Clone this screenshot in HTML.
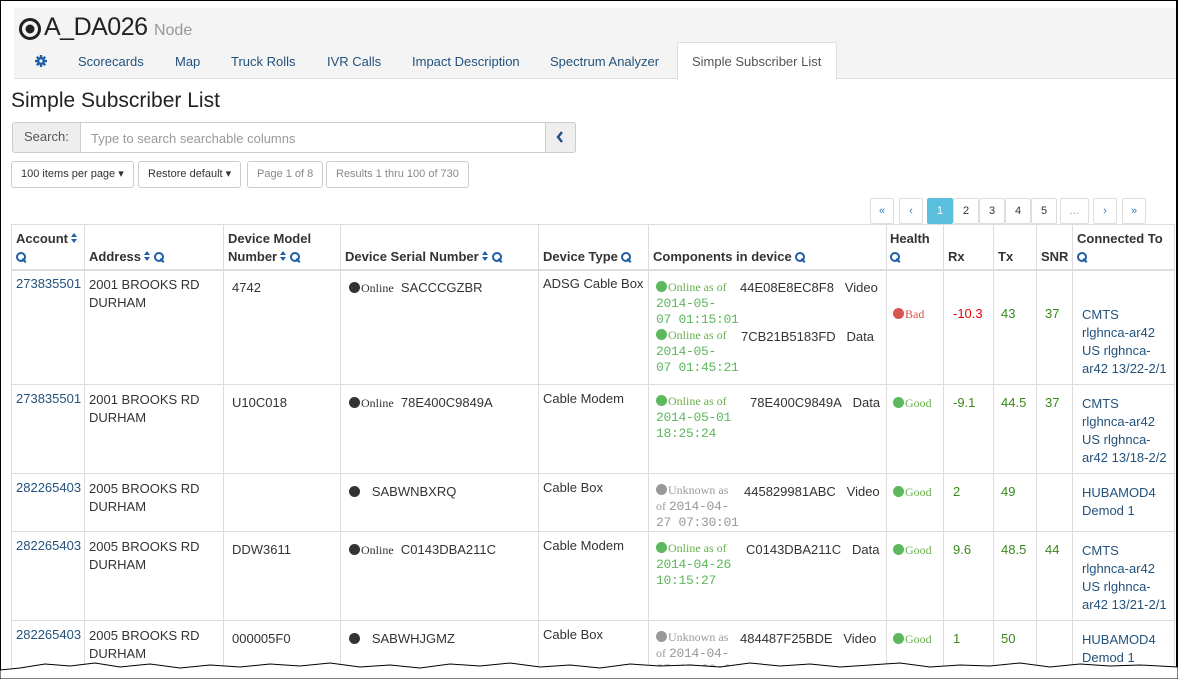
<!DOCTYPE html>
<html><head><meta charset="utf-8"><style>
*{margin:0;padding:0;box-sizing:border-box}
body{width:1178px;height:679px;position:relative;background:#fff;font-family:"Liberation Sans",Arial,sans-serif;font-size:13px;color:#333;overflow:hidden}
.a{position:absolute;white-space:nowrap}
.l{color:#23527c}
.hl{position:absolute;background:#ddd;height:1px}
.vl{position:absolute;background:#ddd;width:1px}
.th{font-weight:bold;color:#333}
.q{display:inline-block;width:10px;height:10px;position:relative;vertical-align:-1px;margin-left:3px}
.q:before{content:"";position:absolute;left:0;top:0;width:6px;height:6px;border:2px solid #1f5fa6;border-radius:50%}
.q:after{content:"";position:absolute;left:7px;top:6px;width:2px;height:5px;background:#1f5fa6;transform:rotate(-45deg)}
.s{display:inline-block;width:7px;height:11px;position:relative;vertical-align:-1px;margin-left:3px}
.s:before{content:"";position:absolute;left:0;top:0;border:3.5px solid transparent;border-bottom:4px solid #1f5fa6;border-top:0}
.s:after{content:"";position:absolute;left:0;top:6px;border:3.5px solid transparent;border-top:4px solid #1f5fa6;border-bottom:0}
.dot{display:inline-block;width:11px;height:11px;border-radius:50%;background:#333;vertical-align:-1px;margin-right:1px}
.on{font-family:"Liberation Serif",serif;font-size:12px}
.g{color:#5cb85c}.gd{background:#5cb85c}.gr{background:#999}
.grn{font-family:"Liberation Serif",serif;font-size:12px;color:#6ab04c}
.gray{font-family:"Liberation Serif",serif;font-size:12px;color:#999}
.dt{font-family:"Liberation Mono",monospace;font-size:13px;line-height:15px;letter-spacing:-0.3px}
.btn{position:absolute;border:1px solid #ccc;border-radius:3px;height:27px;font-size:11px;line-height:25px;padding:0 9px;background:#fff}
.pg{position:absolute;top:198px;height:26px;border:1px solid #ddd;border-radius:2px;font-size:11px;line-height:24px;text-align:center;color:#337ab7;background:#fff}
</style></head><body>
<div class="a" style="left:0;top:0;width:1px;height:670px;background:#000"></div>
<div class="a" style="left:1176px;top:0;width:2px;height:670px;background:#000"></div>
<div class="a" style="left:0;top:0;width:1178px;height:1px;background:#000"></div>
<!-- header -->
<div class="a" style="left:14px;top:8px;width:1162px;height:71px;background:#f4f4f4;border-bottom:1px solid #ddd"></div>
<svg class="a" style="left:18px;top:17px" width="24" height="24" viewBox="0 0 24 24"><circle cx="12" cy="12" r="9.5" fill="none" stroke="#222" stroke-width="3"/><circle cx="12" cy="12" r="4.5" fill="#222"/></svg>
<div class="a" style="left:44px;top:13px;font-size:25px;color:#222;letter-spacing:-0.5px">A_DA026 <span style="font-size:16px;color:#999;letter-spacing:0">Node</span></div>
<svg class="a" style="left:35px;top:55px" width="12" height="12" viewBox="0 0 12 12"><circle cx="6" cy="6" r="4" fill="#1f5fa6"/><g stroke="#1f5fa6" stroke-width="2.4"><line x1="6" y1="0" x2="6" y2="12"/><line x1="0" y1="6" x2="12" y2="6"/><line x1="1.8" y1="1.8" x2="10.2" y2="10.2"/><line x1="10.2" y1="1.8" x2="1.8" y2="10.2"/></g><circle cx="6" cy="6" r="1.6" fill="#f4f4f4"/></svg>
<div class="a l" style="left:78px;top:54px">Scorecards</div>
<div class="a l" style="left:175px;top:54px">Map</div>
<div class="a l" style="left:231px;top:54px">Truck Rolls</div>
<div class="a l" style="left:327px;top:54px">IVR Calls</div>
<div class="a l" style="left:412px;top:54px">Impact Description</div>
<div class="a l" style="left:550px;top:54px">Spectrum Analyzer</div>
<div class="a" style="left:677px;top:42px;width:160px;height:38px;background:#fff;border:1px solid #ddd;border-bottom:0;border-radius:3px 3px 0 0"></div>
<div class="a" style="left:692px;top:54px;color:#555">Simple Subscriber List</div>
<div class="a" style="left:11px;top:89px;font-size:21px;color:#222">Simple Subscriber List</div>
<!-- search -->
<div class="a" style="left:12px;top:122px;width:564px;height:31px;border:1px solid #ccc;border-radius:3px;background:#eee"></div>
<div class="a" style="left:24px;top:129px;color:#555">Search:</div>
<div class="a" style="left:80px;top:122px;width:466px;height:31px;border:1px solid #ccc;background:#fff"></div>
<div class="a" style="left:91px;top:131px;color:#999">Type to search searchable columns</div>
<svg class="a" style="left:556px;top:131px" width="8" height="12" viewBox="0 0 8 12"><path d="M6 1 L2 6 L6 11" fill="none" stroke="#1f4f8a" stroke-width="2.4"/></svg>
<div class="btn" style="left:11px;top:161px;color:#333">100 items per page ▾</div>
<div class="btn" style="left:138px;top:161px;color:#333">Restore default ▾</div>
<div class="btn" style="left:247px;top:161px;color:#888">Page 1 of 8</div>
<div class="btn" style="left:326px;top:161px;color:#888">Results 1 thru 100 of 730</div>
<!-- pagination -->
<div class="pg" style="left:870px;width:24px">«</div>
<div class="pg" style="left:899px;width:24px">‹</div>
<div class="pg" style="left:927px;width:26px;background:#5bc0de;border-color:#5bc0de;color:#fff">1</div>
<div class="pg" style="left:953px;width:26px;color:#333">2</div>
<div class="pg" style="left:979px;width:26px;color:#333">3</div>
<div class="pg" style="left:1005px;width:26px;color:#333">4</div>
<div class="pg" style="left:1031px;width:26px;color:#333">5</div>
<div class="pg" style="left:1060px;width:29px;color:#999">…</div>
<div class="pg" style="left:1093px;width:24px">›</div>
<div class="pg" style="left:1122px;width:24px">»</div>
<!-- grid lines -->
<div class="hl" style="left:11px;top:224px;width:1164px"></div>
<div class="hl" style="left:11px;top:269px;width:1164px;height:2px"></div>
<div class="hl" style="left:11px;top:384px;width:1164px"></div>
<div class="hl" style="left:11px;top:473px;width:1164px"></div>
<div class="hl" style="left:11px;top:531px;width:1164px"></div>
<div class="hl" style="left:11px;top:620px;width:1164px"></div>
<div class="vl" style="left:11px;top:224px;height:450px"></div>
<div class="vl" style="left:84px;top:224px;height:450px"></div>
<div class="vl" style="left:223px;top:224px;height:450px"></div>
<div class="vl" style="left:340px;top:224px;height:450px"></div>
<div class="vl" style="left:538px;top:224px;height:450px"></div>
<div class="vl" style="left:648px;top:224px;height:450px"></div>
<div class="vl" style="left:886px;top:224px;height:450px"></div>
<div class="vl" style="left:943px;top:224px;height:450px"></div>
<div class="vl" style="left:993px;top:224px;height:450px"></div>
<div class="vl" style="left:1036px;top:224px;height:450px"></div>
<div class="vl" style="left:1072px;top:224px;height:450px"></div>
<div class="vl" style="left:1174px;top:224px;height:450px"></div>
<!-- headers -->
<div class="a th" style="left:16px;top:231px">Account<span class="s"></span></div>
<div class="a th" style="left:13px;top:249px"><span class="q"></span></div>
<div class="a th" style="left:89px;top:249px">Address<span class="s"></span><span class="q"></span></div>
<div class="a th" style="left:228px;top:231px">Device Model</div>
<div class="a th" style="left:228px;top:249px">Number<span class="s"></span><span class="q"></span></div>
<div class="a th" style="left:345px;top:249px">Device Serial Number<span class="s"></span><span class="q"></span></div>
<div class="a th" style="left:543px;top:249px">Device Type<span class="q"></span></div>
<div class="a th" style="left:653px;top:249px">Components in device<span class="q"></span></div>
<div class="a th" style="left:890px;top:231px">Health</div>
<div class="a th" style="left:887px;top:249px"><span class="q"></span></div>
<div class="a th" style="left:948px;top:249px">Rx</div>
<div class="a th" style="left:998px;top:249px">Tx</div>
<div class="a th" style="left:1041px;top:249px">SNR</div>
<div class="a th" style="left:1077px;top:231px">Connected To</div>
<div class="a th" style="left:1074px;top:249px"><span class="q"></span></div>
<!-- row1 -->
<div class="a l" style="left:16px;top:276px">273835501</div>
<div class="a" style="left:89px;top:276px;line-height:18px">2001 BROOKS RD<br>DURHAM</div>
<div class="a" style="left:232px;top:280px">4742</div>
<div class="a" style="left:349px;top:280px"><span class="dot"></span><span class="on">Online</span>&nbsp; SACCCGZBR</div>
<div class="a" style="left:543px;top:276px">ADSG Cable Box</div>
<div class="a" style="left:656px;top:279px;line-height:15px"><span class="dot gd"></span><span class="grn">Online as of</span><br><span class="dt g">2014-05-<br>07 01:15:01</span></div>
<div class="a" style="left:740px;top:280px">44E08E8EC8F8&nbsp;&nbsp; Video</div>
<div class="a" style="left:656px;top:327px;line-height:15px"><span class="dot gd"></span><span class="grn">Online as of</span><br><span class="dt g">2014-05-<br>07 01:45:21</span></div>
<div class="a" style="left:741px;top:329px">7CB21B5183FD&nbsp;&nbsp; Data</div>
<div class="a" style="left:893px;top:306px"><span class="dot" style="background:#d9534f"></span><span class="on" style="color:#d9534f">Bad</span></div>
<div class="a" style="left:953px;top:306px;color:#e00">-10.3</div>
<div class="a" style="left:1001px;top:306px;color:#3a8a1a">43</div>
<div class="a" style="left:1045px;top:306px;color:#3a8a1a">37</div>
<div class="a l" style="left:1082px;top:306px;line-height:18px">CMTS<br>rlghnca-ar42<br>US rlghnca-<br>ar42 13/22-2/1</div>
<!-- row2 -->
<div class="a l" style="left:16px;top:391px">273835501</div>
<div class="a" style="left:89px;top:391px;line-height:18px">2001 BROOKS RD<br>DURHAM</div>
<div class="a" style="left:232px;top:395px">U10C018</div>
<div class="a" style="left:349px;top:395px"><span class="dot"></span><span class="on">Online</span>&nbsp; 78E400C9849A</div>
<div class="a" style="left:543px;top:391px">Cable Modem</div>
<div class="a" style="left:656px;top:393px;line-height:15px"><span class="dot gd"></span><span class="grn">Online as of</span><br><span class="dt g">2014-05-01<br>18:25:24</span></div>
<div class="a" style="left:750px;top:395px">78E400C9849A&nbsp;&nbsp; Data</div>
<div class="a" style="left:893px;top:395px"><span class="dot gd"></span><span class="grn">Good</span></div>
<div class="a" style="left:953px;top:395px;color:#3a8a1a">-9.1</div>
<div class="a" style="left:1001px;top:395px;color:#3a8a1a">44.5</div>
<div class="a" style="left:1045px;top:395px;color:#3a8a1a">37</div>
<div class="a l" style="left:1082px;top:395px;line-height:18px">CMTS<br>rlghnca-ar42<br>US rlghnca-<br>ar42 13/18-2/2</div>
<!-- row3 -->
<div class="a l" style="left:16px;top:480px">282265403</div>
<div class="a" style="left:89px;top:480px;line-height:18px">2005 BROOKS RD<br>DURHAM</div>
<div class="a" style="left:349px;top:484px"><span class="dot"></span>&nbsp;&nbsp; SABWNBXRQ</div>
<div class="a" style="left:543px;top:480px">Cable Box</div>
<div class="a" style="left:656px;top:482px;line-height:15px"><span class="dot gr"></span><span class="gray">Unknown as</span><br><span class="gray">of </span><span class="dt" style="color:#999">2014-04-<br>27 07:30:01</span></div>
<div class="a" style="left:744px;top:484px">445829981ABC&nbsp;&nbsp; Video</div>
<div class="a" style="left:893px;top:484px"><span class="dot gd"></span><span class="grn">Good</span></div>
<div class="a" style="left:953px;top:484px;color:#3a8a1a">2</div>
<div class="a" style="left:1001px;top:484px;color:#3a8a1a">49</div>
<div class="a l" style="left:1082px;top:484px;line-height:18px">HUBAMOD4<br>Demod 1</div>
<!-- row4 -->
<div class="a l" style="left:16px;top:538px">282265403</div>
<div class="a" style="left:89px;top:538px;line-height:18px">2005 BROOKS RD<br>DURHAM</div>
<div class="a" style="left:232px;top:542px">DDW3611</div>
<div class="a" style="left:349px;top:542px"><span class="dot"></span><span class="on">Online</span>&nbsp; C0143DBA211C</div>
<div class="a" style="left:543px;top:538px">Cable Modem</div>
<div class="a" style="left:656px;top:540px;line-height:15px"><span class="dot gd"></span><span class="grn">Online as of</span><br><span class="dt g">2014-04-26<br>10:15:27</span></div>
<div class="a" style="left:746px;top:542px">C0143DBA211C&nbsp;&nbsp; Data</div>
<div class="a" style="left:893px;top:542px"><span class="dot gd"></span><span class="grn">Good</span></div>
<div class="a" style="left:953px;top:542px;color:#3a8a1a">9.6</div>
<div class="a" style="left:1001px;top:542px;color:#3a8a1a">48.5</div>
<div class="a" style="left:1045px;top:542px;color:#3a8a1a">44</div>
<div class="a l" style="left:1082px;top:542px;line-height:18px">CMTS<br>rlghnca-ar42<br>US rlghnca-<br>ar42 13/21-2/1</div>
<!-- row5 -->
<div class="a l" style="left:16px;top:627px">282265403</div>
<div class="a" style="left:89px;top:627px;line-height:18px">2005 BROOKS RD<br>DURHAM</div>
<div class="a" style="left:232px;top:631px">000005F0</div>
<div class="a" style="left:349px;top:631px"><span class="dot"></span>&nbsp;&nbsp; SABWHJGMZ</div>
<div class="a" style="left:543px;top:627px">Cable Box</div>
<div class="a" style="left:656px;top:629px;line-height:15px"><span class="dot gr"></span><span class="gray">Unknown as</span><br><span class="gray">of </span><span class="dt" style="color:#999">2014-04-<br>27 07:30:01</span></div>
<div class="a" style="left:740px;top:631px">484487F25BDE&nbsp;&nbsp; Video</div>
<div class="a" style="left:893px;top:631px"><span class="dot gd"></span><span class="grn">Good</span></div>
<div class="a" style="left:953px;top:631px;color:#3a8a1a">1</div>
<div class="a" style="left:1001px;top:631px;color:#3a8a1a">50</div>
<div class="a l" style="left:1082px;top:631px;line-height:18px">HUBAMOD4<br>Demod 1</div>
<!-- torn edge -->
<svg class="a" style="left:0;top:660px" width="1178" height="19" viewBox="0 0 1178 19"><path d="M0 10 L20 8 L45 4 L70 6 L95 3 L120 7 L150 4 L180 8 L210 5 L240 7 L270 4 L300 6 L330 3 L360 7 L390 5 L420 8 L450 4 L480 6 L510 3 L540 7 L570 5 L600 8 L630 4 L660 6 L690 5 L720 7 L750 3 L780 6 L810 4 L840 7 L870 5 L900 3 L930 7 L960 5 L990 6 L1020 3 L1050 7 L1080 4 L1110 6 L1140 5 L1178 7 L1178 19 L0 19Z" fill="#fff" stroke="#000" stroke-width="1"/></svg>
</body></html>
